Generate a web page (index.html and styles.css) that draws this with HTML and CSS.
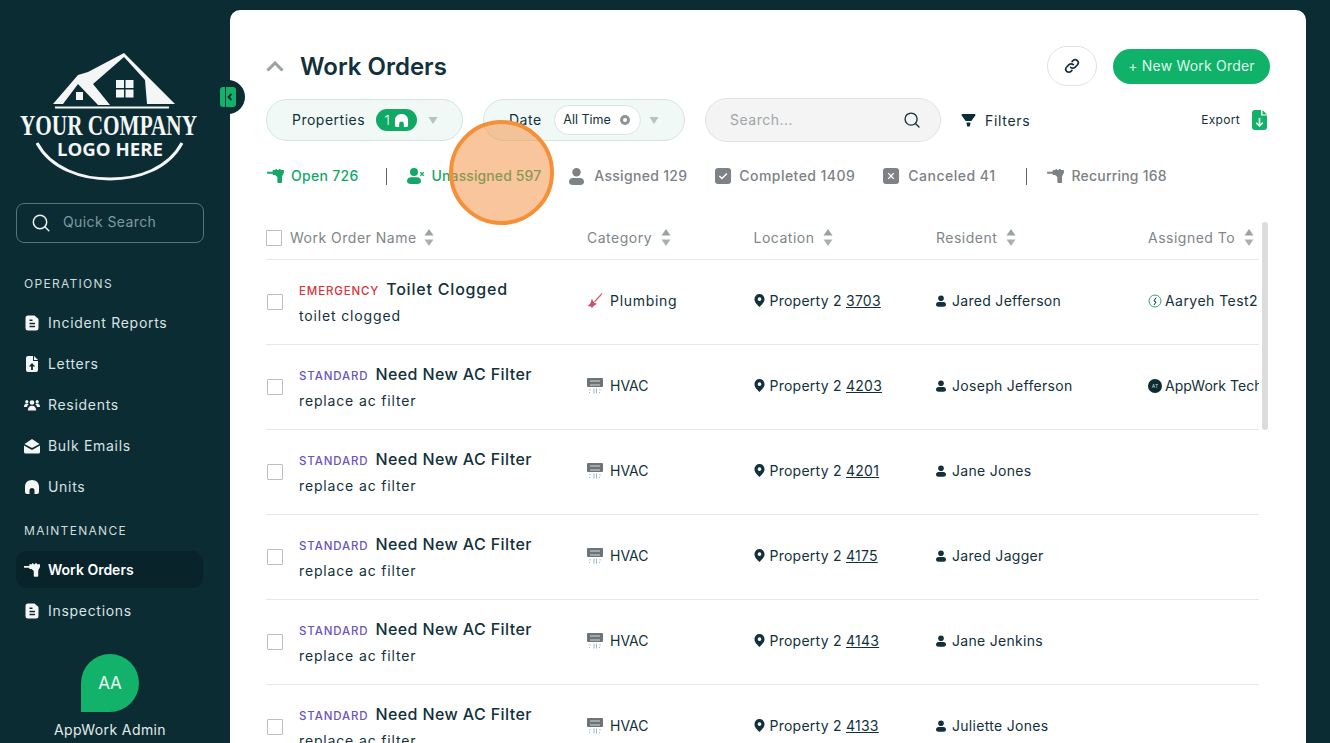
FILE: index.html
```html
<!DOCTYPE html>
<html lang="en">
<head>
<meta charset="utf-8">
<title>Work Orders</title>
<link rel="stylesheet" href="styles.css">
</head>
<body>
<svg class="defs" aria-hidden="true">
  <symbol id="i-doc" viewBox="0 0 16 16"><path fill-rule="evenodd" d="M4 .5h6.500L14.500 4v9a2.500 2.500 0 0 1-2.500 2.500H4A2.500 2.500 0 0 1 1.500 13V3A2.500 2.500 0 0 1 4 .5zm1.500 4V6h3V4.500zm0 3.300v1.500h5.500V7.800zm0 3v1.500h5.500v-1.500z"/></symbol>
  <symbol id="i-fileup" viewBox="0 0 16 16"><path fill-rule="evenodd" d="M4 0h5v5h5v9a2 2 0 0 1-2 2H4a2 2 0 0 1-2-2V2a2 2 0 0 1 2-2zm6 0l4 4h-4zM8 7l-3.200 3.400h2.300V14h1.800v-3.600h2.300z"/></symbol>
  <symbol id="i-users" viewBox="0 0 16 16"><circle cx="8" cy="5.500" r="2.300"/><circle cx="2.800" cy="4.700" r="1.600"/><circle cx="13.200" cy="4.700" r="1.600"/><path d="M3.800 13.500c0-3 1.700-4.800 4.200-4.800s4.200 1.800 4.200 4.800zM0 10c0-2 1-3.500 2.800-3.500.8 0 1.400.3 1.900.8C3.700 8 3.100 9 2.900 10zM16 10c0-2-1-3.500-2.800-3.500-.8 0-1.400.3-1.900.8 1 .7 1.600 1.700 1.800 2.700z"/></symbol>
  <symbol id="i-mail" viewBox="0 0 16 16"><path d="M8 1l7.500 5L8 10 .5 6zM0 7.500l8 4.400 8-4.400V14a1.500 1.500 0 0 1-1.500 1.500h-13A1.500 1.500 0 0 1 0 14z"/></symbol>
  <symbol id="i-home" viewBox="0 0 16 16"><path fill-rule="evenodd" d="M8 1c4 0 7 2.800 7 6.500V13a2 2 0 0 1-2 2h-2.500v-3.500a2.500 2.500 0 0 0-5 0V15H3a2 2 0 0 1-2-2V7.500C1 3.800 4 1 8 1z"/></symbol>
  <symbol id="i-drill" viewBox="0 0 18 15"><path d="M0 3h6V1h3V0h1.500v1h2V0h2v1H18v3l-2 4v6a1 1 0 0 1-1 1h-3a1 1 0 0 1-1-1V8.500L8.500 6.500H6V5H0z"/></symbol>
  <symbol id="i-search" viewBox="0 0 20 20"><circle cx="9" cy="9" r="6.700" fill="none" stroke="currentColor" stroke-width="1.500"/><path d="M13.800 13.800l4 4" fill="none" stroke="currentColor" stroke-width="1.500" stroke-linecap="round"/></symbol>
  <symbol id="i-link" viewBox="0 0 16 16"><path d="M6.700 9.300a3 3 0 0 0 4.300 0l2.300-2.300a3 3 0 0 0-4.300-4.300l-.9.900M9.300 6.700a3 3 0 0 0-4.300 0L2.700 9a3 3 0 0 0 4.300 4.300l.9-.9" fill="none" stroke="currentColor" stroke-width="1.700" stroke-linecap="round"/></symbol>
  <symbol id="i-funnel" viewBox="0 0 16 16"><path d="M1.500 1h13a1 1 0 0 1 .8 1.600L11 8.500H5L.7 2.600A1 1 0 0 1 1.500 1zM5.800 10h4.400l-.6 3.600a1 1 0 0 1-1 .9H7.400a1 1 0 0 1-1-.9z"/></symbol>
  <symbol id="i-export" viewBox="0 0 15 20"><path fill-rule="evenodd" d="M3 0h6v5.500h6V17a3 3 0 0 1-3 3H3a3 3 0 0 1-3-3V3a3 3 0 0 1 3-3zm7.500 0L15 4.500h-4.500zM6.700 8v6.200L4.800 12.300l-1 1L7.500 17l3.700-3.700-1-1-1.900 1.900V8z"/></symbol>
  <symbol id="i-userx" viewBox="0 0 18 16"><circle cx="7" cy="4" r="4"/><path d="M0 13c0-2.300 1.700-3.800 3.800-3.800h6.400c2.100 0 3.800 1.500 3.800 3.800s-1.700 3-3.800 3H3.800C1.700 16 0 15.300 0 13z"/><path d="M13.300 4.300l3.400 3.400M16.700 4.300l-3.400 3.400" stroke="currentColor" stroke-width="1.300" fill="none"/></symbol>
  <symbol id="i-user" viewBox="0 0 16 18"><circle cx="8" cy="4.500" r="4.500"/><path d="M0 14.500c0-2.500 1.800-4 4-4h8c2.200 0 4 1.500 4 4s-1.800 3.500-4 3.500H4c-2.200 0-4-1-4-3.500z"/></symbol>
  <symbol id="i-check" viewBox="0 0 16 16"><path fill-rule="evenodd" d="M3 0h10a3 3 0 0 1 3 3v10a3 3 0 0 1-3 3H3a3 3 0 0 1-3-3V3a3 3 0 0 1 3-3zm8.300 5L7 9.400 4.900 7.400 3.800 8.500 7 11.600l5.400-5.500z"/></symbol>
  <symbol id="i-xbox" viewBox="0 0 16 16"><path fill-rule="evenodd" d="M3 0h10a3 3 0 0 1 3 3v10a3 3 0 0 1-3 3H3a3 3 0 0 1-3-3V3a3 3 0 0 1 3-3zm2.600 4.700L4.700 5.600 7.100 8l-2.400 2.400.9.900L8 8.900l2.400 2.400.9-.9L8.900 8l2.400-2.400-.9-.9L8 7.100z"/></symbol>
  <symbol id="i-pin" viewBox="0 0 12 14"><path fill-rule="evenodd" d="M6 0a5.500 5.500 0 0 1 5.500 5.500c0 3.500-3.500 6.500-5.500 8.500-2-2-5.500-5-5.500-8.500A5.500 5.500 0 0 1 6 0zm0 3.500a2 2 0 1 0 0 4 2 2 0 0 0 0-4z"/></symbol>
  <symbol id="i-plunger" viewBox="0 0 16 16"><path d="M15 .5L7.500 9" fill="none" stroke="#d9646f" stroke-width="1.200"/><path d="M5 5.500c.5 2.500 3 5 5 5.200L6 13.500l-1 2-1-2-3.500-.5 2.800-2.500z" fill="#c2536d"/></symbol>
  <symbol id="i-hvac" viewBox="0 0 16 16"><path d="M1 0h14a1 1 0 0 1 1 1v7a1 1 0 0 1-1 1H1a1 1 0 0 1-1-1V1a1 1 0 0 1 1-1z" fill="#6c7479"/><path d="M3 3h10M3 7h10" stroke="#d5d8da" stroke-width="1"/><path d="M3 11v1.500M2 14.500h1M7 10.500v5M9.500 10.500v5M13 11v1.500M12 14.500h1" stroke="#7fa5b8" stroke-width=".8"/></symbol>
  <symbol id="i-sort" viewBox="0 0 10 17"><path d="M5 0l4.500 6.500h-9z"/><path d="M.5 10.500h9L5 17z" opacity=".85"/></symbol>
</svg>

<div class="app">
  <aside class="sidebar">
    <svg class="logo" viewBox="16 50 190 135">
      <path class="logo-fill" fill-rule="evenodd" d="M124 53L88 72 78 75 53 104h10l15-20 20 21h12L93 84l31-27z"/>
      <path class="logo-fill" d="M124 53l51 51h-28l-2-24-21-23z"/>
      <rect class="logo-fill" x="76" y="92" width="7" height="8"/>
      <path class="logo-fill" d="M116 80h8v8h-8zM125.500 80h8v8h-8zM116 89.500h8v8h-8zM125.500 89.500h8v8h-8z"/>
      <rect class="logo-fill" x="55" y="106.500" width="114" height="2"/>
      <text class="logo-big" x="20" y="135" textLength="177" lengthAdjust="spacingAndGlyphs">YOUR COMPANY</text>
      <text class="logo-small" x="57" y="156" textLength="106" lengthAdjust="spacingAndGlyphs">LOGO HERE</text>
      <path class="logo-arc" d="M37 143c14 26 45 36 73 36s58-10 72-36"/>
    </svg>
    <label class="quick">
      <svg class="quick-icon"><use href="#i-search"/></svg>
      <span>Quick Search</span>
    </label>
    <div class="section operations">OPERATIONS</div>
    <nav class="nav">
      <a class="nav-item"><svg class="nav-icon"><use href="#i-doc"/></svg>Incident Reports</a>
      <a class="nav-item"><svg class="nav-icon"><use href="#i-fileup"/></svg>Letters</a>
      <a class="nav-item"><svg class="nav-icon"><use href="#i-users"/></svg>Residents</a>
      <a class="nav-item"><svg class="nav-icon"><use href="#i-mail"/></svg>Bulk Emails</a>
      <a class="nav-item"><svg class="nav-icon"><use href="#i-home"/></svg>Units</a>
    </nav>
    <div class="section maintenance">MAINTENANCE</div>
    <nav class="nav nav-2">
      <a class="nav-item active"><svg class="nav-icon"><use href="#i-drill"/></svg>Work Orders</a>
      <a class="nav-item"><svg class="nav-icon"><use href="#i-doc"/></svg>Inspections</a>
    </nav>
    <div class="avatar">AA</div>
    <div class="admin">AppWork Admin</div>
    <div class="toggle"><span class="toggle-inner"><svg viewBox="0 0 8 8"><path d="M5.500 1L2.500 4l3 3"/></svg></span></div>
  </aside>

  <main class="main">
    <header class="top">
      <svg class="chev" viewBox="0 0 18 11"><path d="M1.500 9.500L9 2l7.500 7.500"/></svg>
      <h1>Work Orders</h1>
      <button class="link-btn"><svg><use href="#i-link"/></svg></button>
      <button class="new-btn">+ New Work Order</button>
    </header>

    <div class="filters">
      <div class="pill pill-prop">
        <span class="pill-label">Properties</span>
        <span class="count">1<svg><use href="#i-home"/></svg></span>
        <svg class="caret caret-prop" viewBox="0 0 10 7"><path d="M.5 0h9L5 7z"/></svg>
      </div>
      <div class="pill pill-date">
        <span class="pill-label">Date</span>
        <span class="alltime"><span>All Time</span><svg viewBox="0 0 12 12"><circle cx="6" cy="6" r="5" fill="#8d9397"/><circle cx="6" cy="6" r="2" fill="#fff"/></svg></span>
        <svg class="caret caret-date" viewBox="0 0 10 7"><path d="M.5 0h9L5 7z"/></svg>
      </div>
      <div class="search"><span>Search...</span><svg><use href="#i-search"/></svg></div>
      <div class="filter-btn"><svg><use href="#i-funnel"/></svg>Filters</div>
      <div class="export"><span>Export</span><svg><use href="#i-export"/></svg></div>
    </div>

    <div class="tabs">
      <span class="tab on t-open"><svg class="ic-drill"><use href="#i-drill"/></svg><span>Open 726</span></span>
      <i class="sep s1"></i>
      <span class="tab on t-un"><svg class="ic-userx"><use href="#i-userx"/></svg><span>Unassigned 597</span></span>
      <span class="tab t-as"><svg class="ic-user"><use href="#i-user"/></svg><span>Assigned 129</span></span>
      <span class="tab t-co"><svg class="ic-box"><use href="#i-check"/></svg><span>Completed 1409</span></span>
      <span class="tab t-ca"><svg class="ic-box"><use href="#i-xbox"/></svg><span>Canceled 41</span></span>
      <i class="sep s2"></i>
      <span class="tab t-re"><svg class="ic-drill"><use href="#i-drill"/></svg><span>Recurring 168</span></span>
    </div>

    <div class="table-wrap">
      <div class="table">
        <div class="row head">
          <div class="cell name-head"><span class="box head-box"></span><span>Work Order Name</span><svg class="sort"><use href="#i-sort"/></svg></div>
          <div class="cell"><span>Category</span><svg class="sort"><use href="#i-sort"/></svg></div>
          <div class="cell"><span>Location</span><svg class="sort"><use href="#i-sort"/></svg></div>
          <div class="cell"><span>Resident</span><svg class="sort"><use href="#i-sort"/></svg></div>
          <div class="cell"><span>Assigned To</span><svg class="sort"><use href="#i-sort"/></svg></div>
        </div>

        <div class="row">
          <div class="cell wo"><span class="box"></span><div class="wo-text"><div class="wo-title"><span class="tag emergency">EMERGENCY</span><b class="wide">Toilet Clogged</b></div><div class="wo-desc">toilet clogged</div></div></div>
          <div class="cell"><svg class="cat"><use href="#i-plunger"/></svg><span class="plumb">Plumbing</span></div>
          <div class="cell"><svg class="pin"><use href="#i-pin"/></svg><span class="loc">Property 2 <u>3703</u></span></div>
          <div class="cell"><svg class="res"><use href="#i-user"/></svg><span class="person">Jared Jefferson</span></div>
          <div class="cell assignee"><svg class="who" viewBox="0 0 14 14"><circle cx="7" cy="7" r="6" fill="#fff" stroke="#2aa876"/><path d="M8 3.500L6 7l2 1-2 3" fill="none" stroke="#12313a"/></svg><span>Aaryeh Test2</span></div>
        </div>

        <div class="row">
          <div class="cell wo"><span class="box"></span><div class="wo-text"><div class="wo-title"><span class="tag standard">STANDARD</span><b>Need New AC Filter</b></div><div class="wo-desc">replace ac filter</div></div></div>
          <div class="cell"><svg class="cat"><use href="#i-hvac"/></svg><span class="hvac">HVAC</span></div>
          <div class="cell"><svg class="pin"><use href="#i-pin"/></svg><span class="loc">Property 2 <u>4203</u></span></div>
          <div class="cell"><svg class="res"><use href="#i-user"/></svg><span class="person">Joseph Jefferson</span></div>
          <div class="cell assignee"><span class="at">AT</span><span class="tech">AppWork Tech</span></div>
        </div>

        <div class="row">
          <div class="cell wo"><span class="box"></span><div class="wo-text"><div class="wo-title"><span class="tag standard">STANDARD</span><b>Need New AC Filter</b></div><div class="wo-desc">replace ac filter</div></div></div>
          <div class="cell"><svg class="cat"><use href="#i-hvac"/></svg><span class="hvac">HVAC</span></div>
          <div class="cell"><svg class="pin"><use href="#i-pin"/></svg><span class="loc">Property 2 <u>4201</u></span></div>
          <div class="cell"><svg class="res"><use href="#i-user"/></svg><span class="person">Jane Jones</span></div>
          <div class="cell"></div>
        </div>

        <div class="row">
          <div class="cell wo"><span class="box"></span><div class="wo-text"><div class="wo-title"><span class="tag standard">STANDARD</span><b>Need New AC Filter</b></div><div class="wo-desc">replace ac filter</div></div></div>
          <div class="cell"><svg class="cat"><use href="#i-hvac"/></svg><span class="hvac">HVAC</span></div>
          <div class="cell"><svg class="pin"><use href="#i-pin"/></svg><span class="loc">Property 2 <u>4175</u></span></div>
          <div class="cell"><svg class="res"><use href="#i-user"/></svg><span class="person">Jared Jagger</span></div>
          <div class="cell"></div>
        </div>

        <div class="row">
          <div class="cell wo"><span class="box"></span><div class="wo-text"><div class="wo-title"><span class="tag standard">STANDARD</span><b>Need New AC Filter</b></div><div class="wo-desc">replace ac filter</div></div></div>
          <div class="cell"><svg class="cat"><use href="#i-hvac"/></svg><span class="hvac">HVAC</span></div>
          <div class="cell"><svg class="pin"><use href="#i-pin"/></svg><span class="loc">Property 2 <u>4143</u></span></div>
          <div class="cell"><svg class="res"><use href="#i-user"/></svg><span class="person">Jane Jenkins</span></div>
          <div class="cell"></div>
        </div>

        <div class="row">
          <div class="cell wo"><span class="box"></span><div class="wo-text"><div class="wo-title"><span class="tag standard">STANDARD</span><b>Need New AC Filter</b></div><div class="wo-desc">replace ac filter</div></div></div>
          <div class="cell"><svg class="cat"><use href="#i-hvac"/></svg><span class="hvac">HVAC</span></div>
          <div class="cell"><svg class="pin"><use href="#i-pin"/></svg><span class="loc">Property 2 <u>4133</u></span></div>
          <div class="cell"><svg class="res"><use href="#i-user"/></svg><span class="person">Juliette Jones</span></div>
          <div class="cell"></div>
        </div>
      </div>
      <div class="scrollbar"></div>
    </div>
  </main>
</div>
<div class="click-mark"></div>
</body>
</html>
```

FILE: styles.css
```css
* { box-sizing: border-box; }
html, body { margin: 0; height: 100%; overflow: hidden; }
body { background: #0b2c33; color: #12313a; font-family: Inter, "Noto Sans", sans-serif; font-size: 14px; }
.defs { position: absolute; width: 0; height: 0; }
svg { display: block; flex: none; fill: currentColor; }
.app { display: flex; height: 743px; }

/* sidebar */
.sidebar { position: relative; z-index: 2; width: 230px; flex: none; padding: 50px 26px 0 16px; display: flex; flex-direction: column; color: #dfe8e8; }
.logo { width: 190px; height: 135px; flex: none; }
.logo-fill { fill: #f4f5f5; }
.logo-big { font-family: "Liberation Serif", serif; font-weight: 700; font-size: 30px; fill: #f4f5f5; }
.logo-small { font-family: "Open Sans", sans-serif; font-weight: 700; font-size: 18px; fill: #f4f5f5; }
.logo-arc { fill: none; stroke: #f4f5f5; stroke-width: 3; }
.quick { margin-top: 18px; height: 40px; width: 188px; border: 1px solid #56757a; border-radius: 8px; display: flex; align-items: center; padding-left: 14px; gap: 12px; color: #7f9a9e; letter-spacing: .4px; flex: none; }
.quick span { padding-bottom: 3px; }
.quick-icon { width: 20px; height: 20px; color: #eef2f2; }
.section { font-size: 12px; letter-spacing: 1.3px; padding-left: 8px; line-height: 16px; color: #cfdcdc; }
.operations { margin-top: 33px; }
.maintenance { margin-top: 18px; }
.nav { display: flex; flex-direction: column; gap: 4px; margin-top: 12px; width: 187px; }
.nav-2 { margin-top: 12px; }
.nav-item { height: 37px; display: flex; align-items: center; padding-left: 8px; gap: 8px; color: #d9e3e3; letter-spacing: .7px; border-radius: 10px; }
.nav-icon { width: 16px; height: 16px; color: #f4f6f6; }
.active { background: #08242a; color: #fff; font-weight: 600; letter-spacing: 0; }
.avatar { width: 58px; height: 58px; border-radius: 50% 50% 50% 0; background: #13b26b; color: #e9fbf2; margin: 25px 0 0 65px; display: flex; align-items: center; justify-content: center; font-size: 17px; flex: none; }
.admin { text-align: center; width: 188px; margin-top: 9px; letter-spacing: .4px; line-height: 18px; color: #e2ebeb; white-space: nowrap; }
.toggle { position: absolute; left: 211px; top: 80px; width: 34px; height: 34px; border-radius: 50%; background: #0b2c33; display: flex; align-items: center; justify-content: center; }
.toggle-inner { width: 16px; height: 20px; margin-left: -1px; border-radius: 3px; background: #13b26b; display: flex; align-items: center; justify-content: flex-end; position: relative; padding-right: 2px; }
.toggle-inner::before { content: ""; position: absolute; left: 5px; top: 0; bottom: 0; width: 1px; background: #0b2c33; }
.toggle-inner svg { width: 8px; height: 8px; fill: none; stroke: #0b2c33; stroke-width: 1.800; }

/* main */
.main { flex: 1; margin: 10px 24px 0 0; background: #fff; border-radius: 10px 10px 0 0; padding: 36px 36px 0; overflow: hidden; min-width: 0; }
.top { display: flex; align-items: center; height: 40px; }
.chev { width: 18px; height: 11px; fill: none; stroke: #99a2a2; stroke-width: 3; margin-right: 16px; }
h1 { margin: 0; flex: 1; font-size: 24px; font-weight: 600; letter-spacing: 0; color: #12313a; }
.link-btn { width: 50px; height: 40px; border-radius: 20px; border: 1px solid #e0e2e2; background: #fff; padding: 0; display: flex; align-items: center; justify-content: center; color: #12313a; }
.link-btn svg { width: 16px; height: 16px; }
.new-btn { width: 157px; height: 35px; margin-left: 16px; border: 0; border-radius: 18px; background: #0fb268; color: #dff7ea; font: inherit; letter-spacing: .2px; padding: 0 0 2px; }

.filters { display: flex; align-items: center; height: 44px; margin-top: 12px; }
.pill { height: 42px; border-radius: 21px; background: #f0f9f5; border: 1px solid #cfe8de; display: flex; align-items: center; }
.pill-prop { width: 197px; padding-left: 25px; }
.pill-date { width: 202px; margin-left: 20px; padding-left: 25px; }
.pill-label { letter-spacing: .5px; padding-bottom: 2px; }
.count { margin-left: 11px; width: 41px; height: 22px; border-radius: 11px; background: #0fa865; color: #cdf3de; display: flex; align-items: center; justify-content: center; gap: 4px; font-size: 13px; }
.count svg { width: 15px; height: 15px; color: #fff; }
.caret { width: 10px; height: 7px; color: #b5c2be; }
.caret-prop { margin-left: 11px; }
.caret-date { margin-left: 8px; }
.alltime { margin-left: 12px; width: 87px; height: 30px; background: #fff; border: 1px solid #dde4e2; border-radius: 15px; display: flex; align-items: center; justify-content: center; gap: 8px; font-size: 12.500px; }
.alltime span { padding-bottom: 2px; }
.alltime svg { width: 12px; height: 12px; }
.search { width: 236px; height: 44px; margin-left: 20px; border-radius: 22px; background: #f4f4f4; border: 1px solid #e2e2e2; display: flex; align-items: center; justify-content: space-between; padding: 0 19px 0 24px; color: #a0a5a8; letter-spacing: .5px; }
.search span { padding-bottom: 2px; }
.search svg { width: 18px; height: 18px; color: #12313a; }
.filter-btn { margin-left: 20px; display: flex; align-items: center; gap: 9px; letter-spacing: .7px; }
.filter-btn svg { width: 15px; height: 15px; color: #0b2c33; }
.export { margin-left: auto; margin-right: 3px; display: flex; align-items: center; gap: 12px; font-size: 12px; letter-spacing: .3px; }
.export span { padding-bottom: 2px; }
.export svg { width: 15px; height: 20px; color: #13b26b; }

.tabs { display: flex; align-items: center; height: 20px; margin-top: 24px; padding-left: 1px; font-weight: 500; color: #7c8285; letter-spacing: .3px; white-space: nowrap; }
.tab { display: flex; align-items: center; gap: 7px; }
.tab span { padding-bottom: 2px; }
.on { color: #16a768; }
.ic-drill { width: 17px; height: 14px; }
.ic-userx { width: 18px; height: 16px; }
.ic-user { width: 15px; height: 17px; }
.ic-box { width: 16px; height: 16px; }
.sep { width: 1px; height: 17px; background: #55666b; flex: none; }
.s1 { margin-left: 27px; }
.t-un { margin-left: 20px; letter-spacing: .1px; }
.t-as { margin-left: 28px; gap: 10px; }
.t-co { margin-left: 28px; gap: 8px; letter-spacing: .45px; }
.t-ca { margin-left: 28px; gap: 9px; letter-spacing: .5px; }
.s2 { margin-left: 30px; }
.t-re { margin-left: 20px; gap: 8px; letter-spacing: .2px; }

.table-wrap { position: relative; margin-top: 31px; }
.table { width: 993px; overflow: hidden; }
.row { display: grid; grid-template-columns: 321px 166.500px 182.500px 212px 111px; height: 85px; border-bottom: 1px solid #e6e8e8; align-items: center; }
.head { height: 43px; color: #7d8689; }
.cell { display: flex; align-items: center; white-space: nowrap; letter-spacing: .45px; gap: 6px; padding-bottom: 3px; }
.head .cell { letter-spacing: .5px; padding-bottom: 1px; }
.head .cell span:not(.box) { padding-bottom: 1px; }
.name-head { gap: 0; }
.sort { width: 10px; height: 17px; margin-left: 3px; color: #9aa2a3; }
.name-head .sort { margin-left: 7px; }
.box { width: 16px; height: 16px; border: 1px solid #b9bfc0; margin: 0 16px 0 1px; flex: none; border-radius: 1px; }
.head .head-box { margin: 0 8px 0 0; }
.wo { gap: 0; padding-bottom: 0; }
.wo-title { display: flex; align-items: baseline; gap: 7px; line-height: 22px; }
.wo-title b { font-size: 16px; font-weight: 500; letter-spacing: .4px; }
.wo-title .wide { letter-spacing: .8px; }
.tag { font-size: 11.500px; font-weight: 500; letter-spacing: .85px; }
.emergency { color: #d4343c; }
.standard { color: #6a55bd; }
.wo-desc { margin-top: 4px; letter-spacing: .85px; line-height: 20px; }
.cat { width: 16px; height: 16px; margin-right: 1px; }
.plumb { letter-spacing: .7px; }
.hvac { letter-spacing: 0; }
.loc { letter-spacing: .25px; }
.person { letter-spacing: .3px; }
.tech { letter-spacing: .05px; }
.pin { width: 11px; height: 13px; margin-right: -1px; }
.res { width: 10px; height: 12px; }
.who { width: 14px; height: 14px; }
.assignee { gap: 3px; }
.at { width: 14px; height: 14px; border-radius: 50%; background: #0b2c33; color: #cfd8d8; font-size: 5px; display: flex; align-items: center; justify-content: center; letter-spacing: 0; flex: none; }
.scrollbar { position: absolute; left: 996px; top: 5px; width: 6px; height: 208px; background: #dcdcdc; border-radius: 3px; }

/* recorded click indicator */
.click-mark { position: absolute; z-index: 5; left: 449px; top: 120px; width: 105px; height: 105px; border-radius: 50%; background: rgba(243, 140, 60, .5); border: 4px solid #f59038; }
```
